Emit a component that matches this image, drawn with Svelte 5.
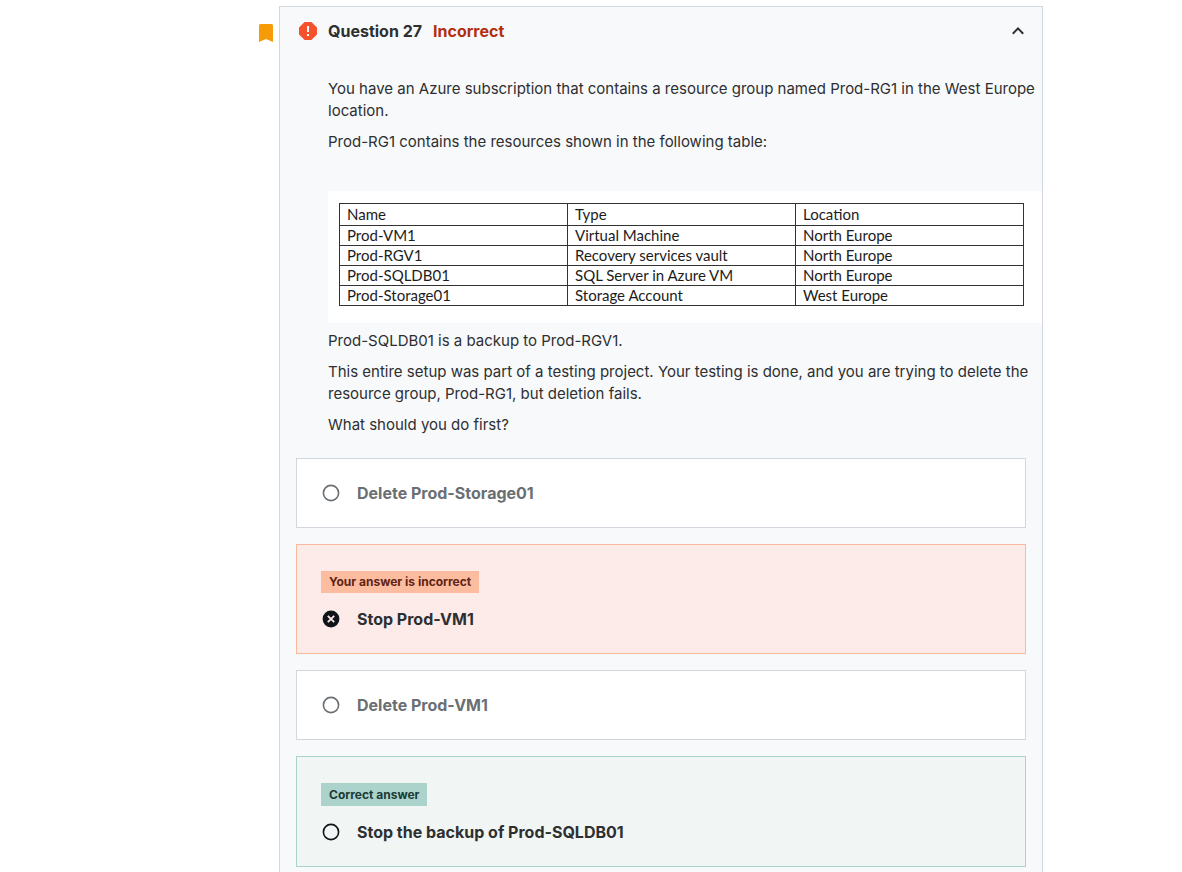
<script>
  const resources = [
    ['Prod-VM1', 'Virtual Machine', 'North Europe'],
    ['Prod-RGV1', 'Recovery services vault', 'North Europe'],
    ['Prod-SQLDB01', 'SQL Server in Azure VM', 'North Europe'],
    ['Prod-Storage01', 'Storage Account', 'West Europe'],
  ];

  const answers = [
    { text: 'Delete Prod-Storage01', state: 'plain' },
    { text: 'Stop Prod-VM1', state: 'wrong', badge: 'Your answer is incorrect' },
    { text: 'Delete Prod-VM1', state: 'plain' },
    { text: 'Stop the backup of Prod-SQLDB01', state: 'right', badge: 'Correct answer' },
  ];

  let open = $state(true);
  let chosen = $state('Stop Prod-VM1');
</script>

<main class="page">
  <div class="gutter">
    <svg class="bookmark" viewBox="0 0 14 18" aria-hidden="true">
      <path d="M1.5 0h11A1.5 1.5 0 0 1 14 1.5V18l-7-3-7 3V1.5A1.5 1.5 0 0 1 1.5 0z" />
    </svg>
  </div>

  <section class="card">
    <header class="head">
      <svg class="alert" viewBox="0 0 18 18" aria-hidden="true">
        <path d="M5.6 0h6.8L18 5.6v6.8L12.4 18H5.6L0 12.4V5.6z" fill="#f4512c" />
        <path d="M8 4h2v6H8zM8 12h2v2H8z" fill="#fff" />
      </svg>
      <h1>Question 27</h1>
      <span class="status">Incorrect</span>
      <button class="toggle" aria-label="Toggle question" aria-expanded={open} onclick={() => (open = !open)}>
        <svg class:closed={!open} viewBox="0 0 20 20" aria-hidden="true">
          <path d="M4.8 12.8 10 7.4l5.2 5.4" fill="none" stroke="#2d2f31" stroke-width="2" />
        </svg>
      </button>
    </header>

    {#if open}
      <div class="prompt">
        <p>You have an Azure subscription that contains a resource group named Prod-RG1 in the West Europe location.</p>
        <p>Prod-RG1 contains the resources shown in the following table:</p>
        <div class="sheet">
          <table>
            <thead>
              <tr><th>Name</th><th>Type</th><th>Location</th></tr>
            </thead>
            <tbody>
              {#each resources as row}
                <tr>{#each row as cell}<td>{cell}</td>{/each}</tr>
              {/each}
            </tbody>
          </table>
        </div>
        <p>Prod-SQLDB01 is a backup to Prod-RGV1.</p>
        <p>This entire setup was part of a testing project. Your testing is done, and you are trying to delete the resource group, Prod-RG1, but deletion fails.</p>
        <p>What should you do first?</p>
      </div>

      <div class="answers">
        {#each answers as answer}
          <label class="answer {answer.state}">
            {#if answer.badge}<span class="badge">{answer.badge}</span>{/if}
            <span class="choice">
              <input type="radio" name="answer" value={answer.text} bind:group={chosen} />
              <svg class="mark" viewBox="0 0 20 20" aria-hidden="true">
                {#if chosen === answer.text}
                  <circle cx="10" cy="10" r="8.4" fill="#101418" />
                  <path d="m6.8 6.8 6.4 6.4m0-6.4-6.4 6.4" stroke="#fcebe9" stroke-width="1.8" />
                {:else}
                  <circle cx="10" cy="10" r="7.6" fill="none" stroke="currentColor" stroke-width="1.6" />
                {/if}
              </svg>
              <span>{answer.text}</span>
            </span>
          </label>
        {/each}
      </div>
    {/if}
  </section>
</main>

<style>
  :global(body) {
    background: #fff;
  }

  .page {
    box-sizing: border-box;
    min-height: 100vh;
    padding-top: 6px;
    display: grid;
    grid-template-columns: 279px minmax(0, 1fr);
    padding-right: 139px;
    font-family: Inter, "Liberation Sans", sans-serif;
    font-size: 15px;
    line-height: 22px;
    color: #2d2f31;
  }

  .gutter {
    display: flex;
    justify-content: flex-end;
    align-items: flex-start;
    padding: 18px 6px 0 0;
  }

  .bookmark {
    width: 14px;
    height: 18px;
    fill: #f69c08;
  }

  .card {
    border: 1px solid #d1d7dc;
    border-bottom: 0;
    background: #f8f9fb;
    padding-bottom: 5px;
  }

  .head {
    display: flex;
    align-items: center;
    height: 48px;
    padding: 0 14px 0 19px;
    font-size: 16px;
    font-weight: 650;
  }

  .alert {
    width: 18px;
    height: 18px;
    margin-right: 11px;
  }

  h1 {
    margin: 0;
    font-size: 16px;
    font-weight: 650;
  }

  .status {
    margin-left: 11px;
    color: #b32d0f;
  }

  .toggle {
    margin-left: auto;
    width: 20px;
    height: 20px;
    padding: 0;
    border: 0;
    background: none;
    cursor: pointer;
  }

  .toggle svg {
    display: block;
    width: 20px;
    height: 20px;
  }

  .toggle svg.closed {
    transform: rotate(180deg);
  }

  .prompt {
    display: flex;
    flex-direction: column;
    gap: 9px;
    padding: 23px 0 22px 48px;
  }

  p {
    margin: 0;
  }

  .sheet {
    margin-top: 29px;
    margin-bottom: -2px;
    padding: 12px 18px 17px 11px;
    background: #fff;
  }

  table {
    width: 100%;
    table-layout: fixed;
    border-collapse: collapse;
    font-family: Lato, "Liberation Sans", sans-serif;
    font-size: 15px;
    line-height: 19px;
    color: #1c1c1c;
  }

  th,
  td {
    padding: 0 7px;
    border: 1px solid #333;
    font-weight: 400;
    text-align: left;
  }

  th {
    line-height: 21px;
  }

  .answers {
    display: flex;
    flex-direction: column;
    gap: 16px;
    padding: 0 16px;
  }

  .answer {
    display: flex;
    flex-direction: column;
    align-items: flex-start;
    gap: 16px;
    padding: 24px;
    border: 1px solid #d1d7dc;
    background: #fff;
    color: #6a6f73;
    font-size: 16px;
    font-weight: 650;
    cursor: pointer;
  }

  .wrong {
    padding-top: 26px;
    border-color: #fbb99b;
    background: #fcebe9;
    color: #2d2f31;
  }

  .right {
    padding-top: 26px;
    border-color: #acd2cc;
    background: #f1f5f4;
    color: #2d2f31;
  }

  .badge {
    padding: 0 8px;
    font-size: 12px;
    line-height: 22px;
  }

  .wrong .badge {
    background: #fcbca0;
    color: #602414;
  }

  .right .badge {
    line-height: 23px;
    background: #acd2cc;
    color: #1a3a35;
  }

  .choice {
    display: flex;
    align-items: center;
    gap: 16px;
    line-height: 20px;
  }

  .choice input {
    position: absolute;
    opacity: 0;
    pointer-events: none;
  }

  .mark {
    width: 20px;
    height: 20px;
  }

  .wrong .mark,
  .right .mark {
    color: #101418;
  }
</style>
